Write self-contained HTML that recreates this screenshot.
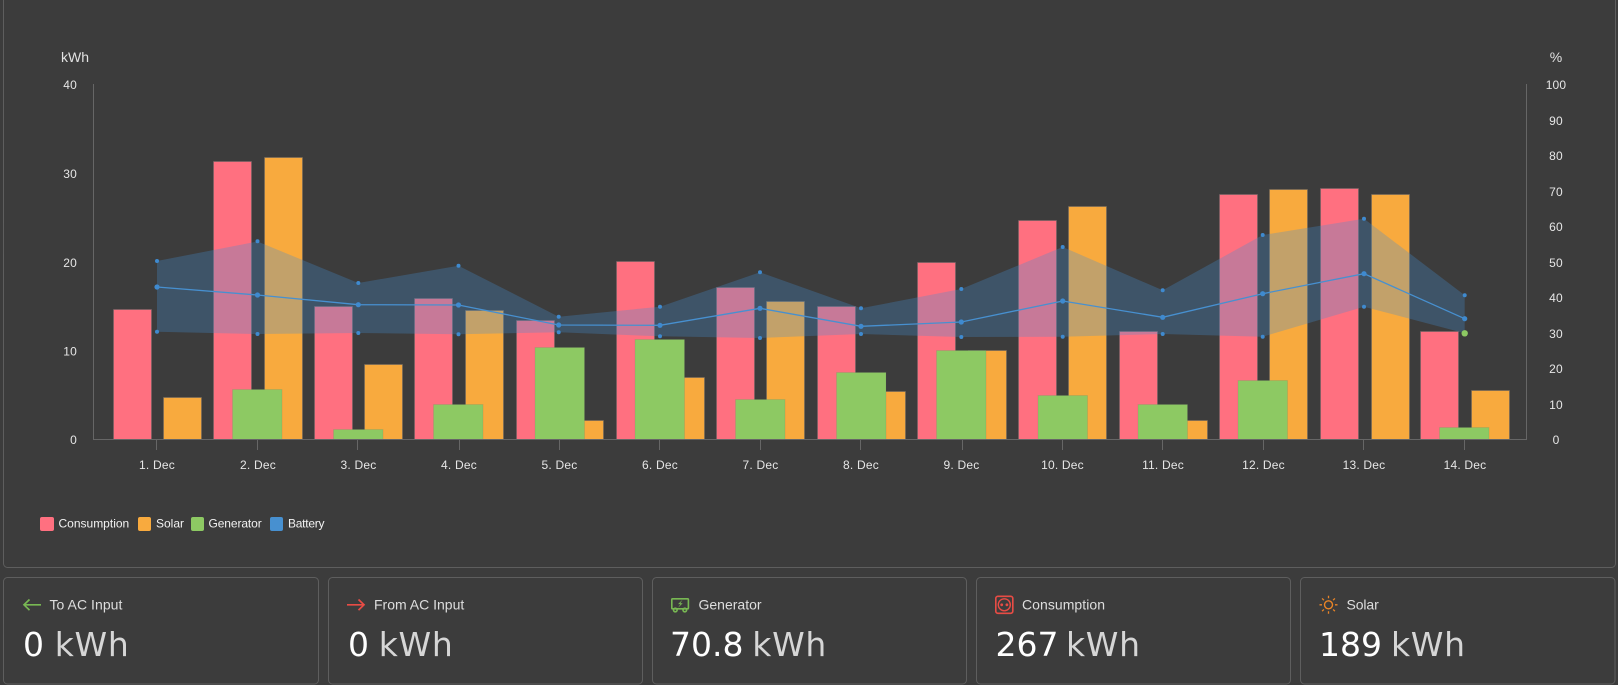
<!DOCTYPE html>
<html>
<head>
<meta charset="utf-8">
<style>
html,body{margin:0;padding:0;background:#3c3c3c;width:1618px;height:685px;overflow:hidden}
svg{display:block}
text{font-family:"Liberation Sans",sans-serif}
.ax{font-size:12px;fill:#e6e6e6;letter-spacing:.2px}
.lg{font-size:12px;fill:#f2f2f2}
.lb{font-size:14px;fill:#dedede}
.big{font-family:"DejaVu Sans",sans-serif;font-size:33px;fill:#fff}
.big tspan{fill:#d6d6d6;letter-spacing:.7px}
</style>
</head>
<body>
<svg width="1618" height="685" viewBox="0 0 1618 685" xmlns="http://www.w3.org/2000/svg">
<rect width="1618" height="685" fill="#3c3c3c"/>
<rect x="3.5" y="-20" width="1612" height="587.5" rx="4" fill="none" stroke="#5e5e5e"/>

<!-- axis titles -->
<text x="61" y="62" font-size="14" fill="#e2e2e2">kWh</text>
<text x="1556" y="62" font-size="14" fill="#e2e2e2" text-anchor="middle">%</text>

<!-- left labels -->
<g class="ax" text-anchor="end">
<text x="77" y="89">40</text><text x="77" y="178">30</text><text x="77" y="267">20</text><text x="77" y="355.5">10</text><text x="77" y="444">0</text>
</g>
<!-- right labels -->
<g class="ax" text-anchor="middle">
<text x="1556" y="89">100</text><text x="1556" y="125">90</text><text x="1556" y="160">80</text><text x="1556" y="196">70</text><text x="1556" y="231">60</text><text x="1556" y="267">50</text><text x="1556" y="302">40</text><text x="1556" y="338">30</text><text x="1556" y="373">20</text><text x="1556" y="409">10</text><text x="1556" y="444">0</text>
</g>

<!-- consumption -->
<g fill="#ff7080" stroke="#666" stroke-opacity=".5">
<rect x="113.5" y="309.5" width="38" height="130"/>
<rect x="213.5" y="161.5" width="38" height="278"/>
<rect x="314.5" y="306.5" width="38" height="133"/>
<rect x="414.5" y="298.5" width="38" height="141"/>
<rect x="516.5" y="320.5" width="38" height="119"/>
<rect x="616.5" y="261.5" width="38" height="178"/>
<rect x="716.5" y="287.5" width="38" height="152"/>
<rect x="817.5" y="306.5" width="38" height="133"/>
<rect x="917.5" y="262.5" width="38" height="177"/>
<rect x="1018.5" y="220.5" width="38" height="219"/>
<rect x="1119.5" y="331.5" width="38" height="108"/>
<rect x="1219.5" y="194.5" width="38" height="245"/>
<rect x="1320.5" y="188.5" width="38" height="251"/>
<rect x="1420.5" y="331.5" width="38" height="108"/>
</g>
<!-- solar -->
<g fill="#f8aa3e" stroke="#666" stroke-opacity=".5">
<rect x="163.5" y="397.5" width="38" height="42"/>
<rect x="264.5" y="157.5" width="38" height="282"/>
<rect x="364.5" y="364.5" width="38" height="75"/>
<rect x="465.5" y="310.5" width="38" height="129"/>
<rect x="565.5" y="420.5" width="38" height="19"/>
<rect x="666.5" y="377.5" width="38" height="62"/>
<rect x="766.5" y="301.5" width="38" height="138"/>
<rect x="867.5" y="391.5" width="38" height="48"/>
<rect x="968.5" y="350.5" width="38" height="89"/>
<rect x="1068.5" y="206.5" width="38" height="233"/>
<rect x="1169.5" y="420.5" width="38" height="19"/>
<rect x="1269.5" y="189.5" width="38" height="250"/>
<rect x="1371.5" y="194.5" width="38" height="245"/>
<rect x="1471.5" y="390.5" width="38" height="49"/>
</g>
<!-- generator -->
<g fill="#8dc963" stroke="#666" stroke-opacity=".15">
<rect x="232.5" y="389.5" width="49.5" height="50"/>
<rect x="333.5" y="429.5" width="49.5" height="10"/>
<rect x="433.5" y="404.5" width="49.5" height="35"/>
<rect x="535" y="347.5" width="49.5" height="92"/>
<rect x="635" y="339.5" width="49.5" height="100"/>
<rect x="735.5" y="399.5" width="49.5" height="40"/>
<rect x="836.5" y="372.5" width="49.5" height="67"/>
<rect x="936.5" y="350.5" width="49.5" height="89"/>
<rect x="1038" y="395.5" width="49.5" height="44"/>
<rect x="1138" y="404.5" width="49.5" height="35"/>
<rect x="1238" y="380.5" width="49.5" height="59"/>
<rect x="1439.5" y="427.5" width="49.5" height="12"/>
</g>

<!-- battery min/max area -->
<polygon fill="#4790d0" fill-opacity=".3" points="157,261 257.5,241.5 358.3,283 458.5,265.7 558.7,316.7 660,306.7 760,272.3 861,308.3 961.3,289 1062.7,247 1162.7,290.3 1262.7,235 1364,218.7 1464.7,295.3 1464.7,333.3 1364,306.7 1262.7,336.7 1162.7,334 1062.7,336.7 961.3,337 861,334 760,338 660,336.3 558.7,332.3 458.5,334.3 358.3,333 257.5,334 157,331.7"/>
<polyline fill="none" stroke="#4790d0" stroke-width="1.3" points="157,287 257.5,295 358.3,304.7 458.5,305 558.7,325 660,325.3 760,308.3 861,326.3 961.3,322 1062.7,301 1162.7,317.3 1262.7,293.7 1364,273.7 1464.7,318.7"/>
<g fill="#3f8acf">
<circle cx="157" cy="261" r="2"/><circle cx="257.5" cy="241.3" r="2"/><circle cx="358.3" cy="283" r="2"/><circle cx="458.5" cy="265.7" r="2"/><circle cx="558.7" cy="316.7" r="2"/><circle cx="660" cy="306.7" r="2"/><circle cx="760" cy="272.3" r="2"/><circle cx="861" cy="308.3" r="2"/><circle cx="961.3" cy="289" r="2"/><circle cx="1062.7" cy="247" r="2"/><circle cx="1162.7" cy="290.3" r="2"/><circle cx="1262.7" cy="235" r="2"/><circle cx="1364" cy="218.7" r="2"/><circle cx="1464.7" cy="295.3" r="2"/>
<circle cx="157" cy="331.7" r="2"/><circle cx="257.5" cy="334" r="2"/><circle cx="358.3" cy="333" r="2"/><circle cx="458.5" cy="334.3" r="2"/><circle cx="558.7" cy="332.3" r="2"/><circle cx="660" cy="336.3" r="2"/><circle cx="760" cy="338" r="2"/><circle cx="861" cy="334" r="2"/><circle cx="961.3" cy="337" r="2"/><circle cx="1062.7" cy="336.7" r="2"/><circle cx="1162.7" cy="334" r="2"/><circle cx="1262.7" cy="336.7" r="2"/><circle cx="1364" cy="306.7" r="2"/>
<circle cx="157" cy="287" r="2.6"/><circle cx="257.5" cy="295" r="2.6"/><circle cx="358.3" cy="304.7" r="2.6"/><circle cx="458.5" cy="305" r="2.6"/><circle cx="558.7" cy="325" r="2.6"/><circle cx="660" cy="325.3" r="2.6"/><circle cx="760" cy="308.3" r="2.6"/><circle cx="861" cy="326.3" r="2.6"/><circle cx="961.3" cy="322" r="2.6"/><circle cx="1062.7" cy="301" r="2.6"/><circle cx="1162.7" cy="317.3" r="2.6"/><circle cx="1262.7" cy="293.7" r="2.6"/><circle cx="1364" cy="273.7" r="2.6"/><circle cx="1464.7" cy="318.7" r="2.6"/>
</g>
<circle cx="1464.7" cy="333.3" r="3.2" fill="#8dc963"/>

<!-- axes -->
<path d="M93.5 84V439.5H1526.5V84" fill="none" stroke="#666"/>
<path d="M156.5 440v10M257.5 440v10M357.5 440v10M459.5 440v10M559.5 440v10M659.5 440v10M760.5 440v10M860.5 440v10M962.5 440v10M1062.5 440v10M1162.5 440v10M1263.5 440v10M1363.5 440v10M1464.5 440v10" stroke="#666"/>
<g class="ax" text-anchor="middle">
<text x="157" y="469">1. Dec</text><text x="258" y="469">2. Dec</text><text x="358.5" y="469">3. Dec</text><text x="459" y="469">4. Dec</text><text x="559.5" y="469">5. Dec</text><text x="660" y="469">6. Dec</text><text x="760.5" y="469">7. Dec</text><text x="861" y="469">8. Dec</text><text x="961.5" y="469">9. Dec</text><text x="1062.5" y="469">10. Dec</text><text x="1163" y="469">11. Dec</text><text x="1263.5" y="469">12. Dec</text><text x="1364" y="469">13. Dec</text><text x="1465" y="469">14. Dec</text>
</g>

<!-- legend -->
<rect x="40" y="517" width="14" height="14" rx="2" fill="#ff7080"/>
<text class="lg" x="58.5" y="527.5">Consumption</text>
<rect x="138" y="517" width="13" height="14" rx="2" fill="#f8aa3e"/>
<text class="lg" x="156" y="527.5">Solar</text>
<rect x="191" y="517" width="13" height="14" rx="2" fill="#8dc963"/>
<text class="lg" x="208.5" y="527.5" letter-spacing="-.1">Generator</text>
<rect x="270" y="517" width="13" height="14" rx="2" fill="#4790d0"/>
<text class="lg" x="288" y="527.5" letter-spacing="-.25">Battery</text>

<!-- cards -->
<g fill="none" stroke="#5e5e5e">
<rect x="3.5" y="577.5" width="315" height="106.5" rx="4"/>
<rect x="328.5" y="577.5" width="314" height="106.5" rx="4"/>
<rect x="652.5" y="577.5" width="314" height="106.5" rx="4"/>
<rect x="976.5" y="577.5" width="314" height="106.5" rx="4"/>
<rect x="1300.5" y="577.5" width="314.5" height="106.5" rx="4"/>
</g>

<!-- card 1 -->
<path d="M41 604.8H24M29.5 599.5l-5.5 5.3 5.5 5.3" fill="none" stroke="#78b853" stroke-width="1.7"/>
<text class="lb" x="49.5" y="609.3" letter-spacing=".05">To AC Input</text>
<text class="big" x="23" y="656">0 <tspan x="54.7">kWh</tspan></text>
<!-- card 2 -->
<path d="M347 604.8H364M358.5 599.5l5.5 5.3-5.5 5.3" fill="none" stroke="#e84c45" stroke-width="1.7"/>
<text class="lb" x="374" y="609.3">From AC Input</text>
<text class="big" x="348" y="656">0 <tspan x="378.7">kWh</tspan></text>
<!-- card 3 -->
<g fill="none" stroke="#78b853" stroke-width="1.6">
<rect x="671.8" y="598.8" width="16.6" height="10" rx=".8"/>
<circle cx="675.3" cy="610" r="1.8"/><circle cx="684.8" cy="610" r="1.8"/>
</g>
<path d="M682.5 599.8l-4.5 4.3h2.4l-2.3 3.6 4.6-4.4h-2.4z" fill="#78b853"/>
<text class="lb" x="698.5" y="609.3">Generator</text>
<text class="big" x="670" y="656">70.8 <tspan x="752.3">kWh</tspan></text>
<!-- card 4 -->
<rect x="995.8" y="596.3" width="17" height="17" rx="2" fill="none" stroke="#e84c45" stroke-width="1.6"/>
<circle cx="1004.3" cy="604.8" r="6" fill="none" stroke="#e84c45" stroke-width="1.4"/>
<circle cx="1001.7" cy="604.8" r="1.4" fill="#e84c45"/><circle cx="1006.9" cy="604.8" r="1.4" fill="#e84c45"/>
<text class="lb" x="1022" y="609.3" letter-spacing=".05">Consumption</text>
<text class="big" x="995.5" y="656">267 <tspan x="1066">kWh</tspan></text>
<!-- card 5 -->
<circle cx="1328.5" cy="604.8" r="4" fill="none" stroke="#e98427" stroke-width="1.4"/>
<path d="M1328.5 595.8v2.5M1328.5 611.3v2.5M1319.5 604.8h2.5M1335 604.8h2.5M1322.1 598.4l1.8 1.8M1333.1 609.4l1.8 1.8M1334.9 598.4l-1.8 1.8M1323.9 609.4l-1.8 1.8" stroke="#e98427" stroke-width="1.3" fill="none"/>
<text class="lb" x="1346.5" y="609.3" letter-spacing="-.1">Solar</text>
<text class="big" x="1319" y="656">189 <tspan x="1391">kWh</tspan></text>
</svg>
</body>
</html>
